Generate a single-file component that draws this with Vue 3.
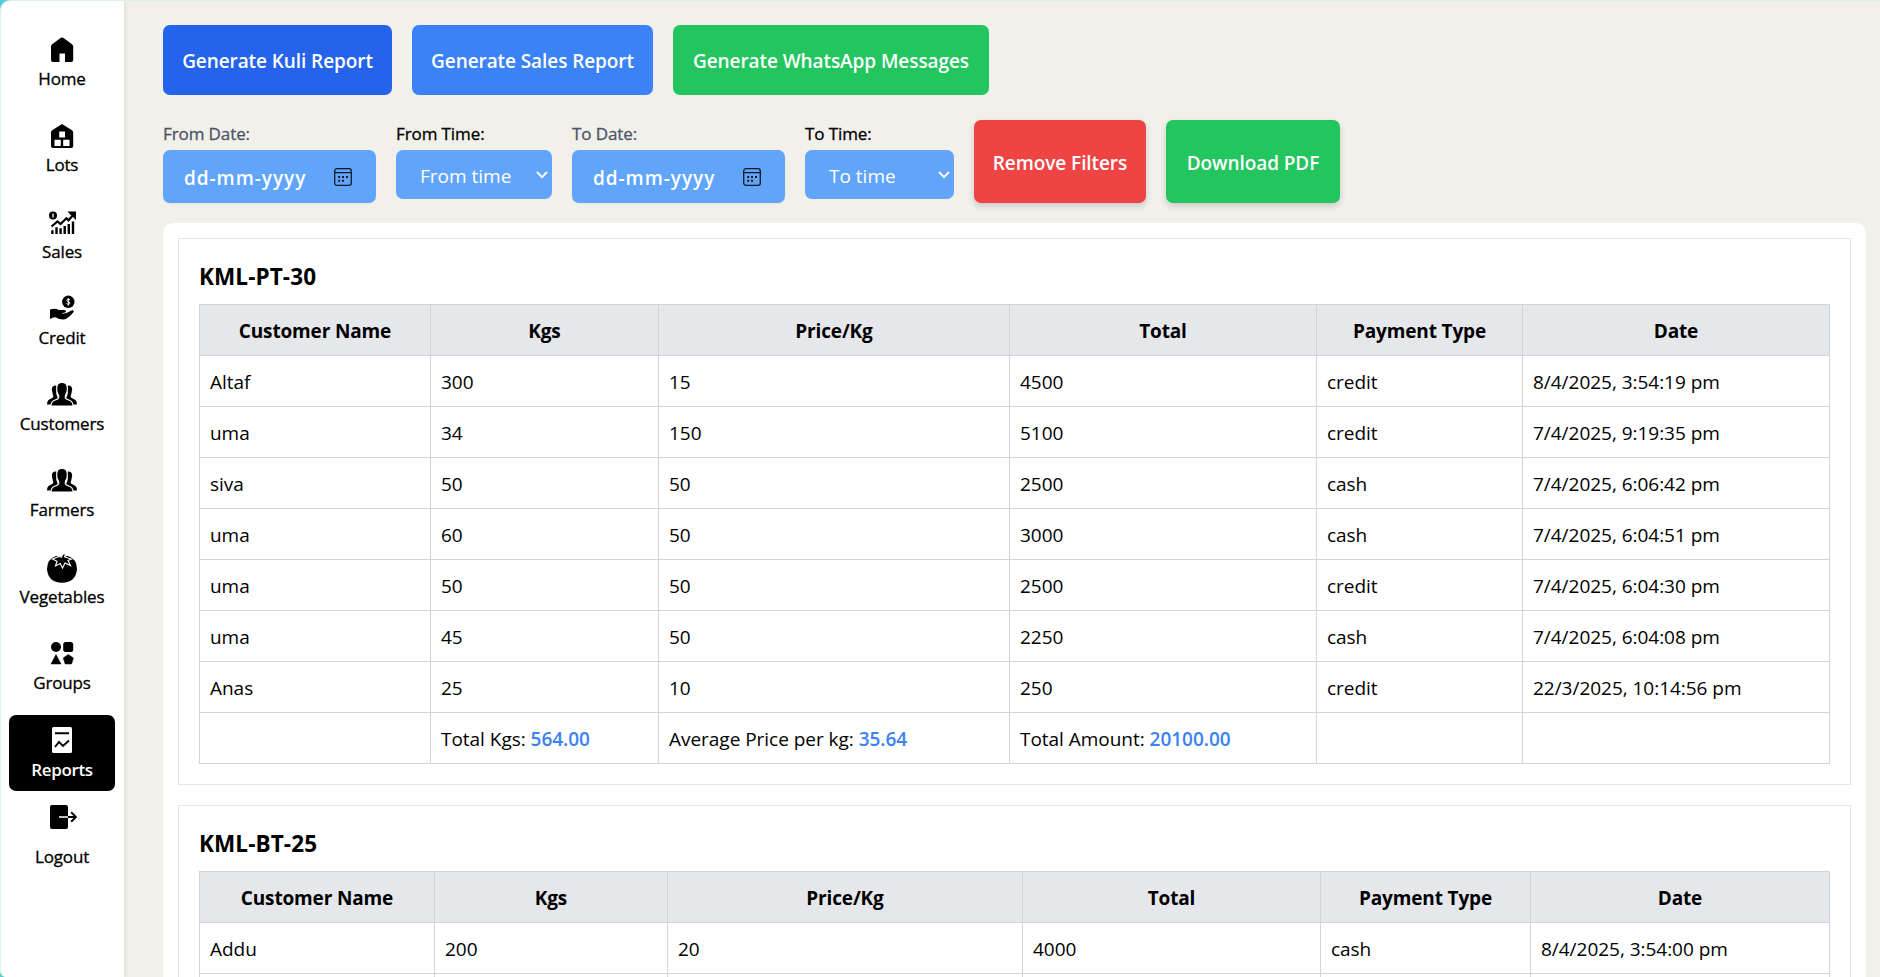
<script setup>
const nav = [
  { label: 'Home', icon: 'home' },
  { label: 'Lots', icon: 'lots' },
  { label: 'Sales', icon: 'sales' },
  { label: 'Credit', icon: 'credit' },
  { label: 'Customers', icon: 'people' },
  { label: 'Farmers', icon: 'people' },
  { label: 'Vegetables', icon: 'tomato' },
  { label: 'Groups', icon: 'groups' },
  { label: 'Reports', icon: 'reports', active: true },
  { label: 'Logout', icon: 'logout' }
]
const heads = ['Customer Name', 'Kgs', 'Price/Kg', 'Total', 'Payment Type', 'Date']
const lots = [
  {
    name: 'KML-PT-30',
    cols: [231, 228, 351, 307, 206, 307],
    rows: [
      ['Altaf', '300', '15', '4500', 'credit', '8/4/2025, 3:54:19 pm'],
      ['uma', '34', '150', '5100', 'credit', '7/4/2025, 9:19:35 pm'],
      ['siva', '50', '50', '2500', 'cash', '7/4/2025, 6:06:42 pm'],
      ['uma', '60', '50', '3000', 'cash', '7/4/2025, 6:04:51 pm'],
      ['uma', '50', '50', '2500', 'credit', '7/4/2025, 6:04:30 pm'],
      ['uma', '45', '50', '2250', 'cash', '7/4/2025, 6:04:08 pm'],
      ['Anas', '25', '10', '250', 'credit', '22/3/2025, 10:14:56 pm']
    ],
    totals: ['564.00', '35.64', '20100.00']
  },
  {
    name: 'KML-BT-25',
    cols: [235, 233, 355, 298, 210, 299],
    rows: [
      ['Addu', '200', '20', '4000', 'cash', '8/4/2025, 3:54:00 pm'],
      ['', '', '', '', '', '']
    ],
    totals: null
  }
]
</script>

<template>
  <div class="app">
    <aside class="sidebar">
      <a v-for="n in nav" :key="n.label" class="item" :class="[n.icon, { active: n.active }]">
        <svg v-if="n.icon === 'home'" class="ico" viewBox="0 0 30 30"><path d="M15 2.500Q15.800 2.500 16.500 3L25 9.300Q26.200 10.200 26.200 11.600V25Q26.200 27 24.200 27H18V18.500H12.500V27H6Q4 27 4 25V11.600Q4 10.200 5.200 9.300L13.500 3Q14.200 2.500 15 2.500Z" /></svg>
        <svg v-else-if="n.icon === 'lots'" class="ico" viewBox="0 0 30 30"><path fill-rule="evenodd" d="M15 3L25 9.300Q26.200 10.100 26.200 11.500V25Q26.200 27 24.200 27H6Q4 27 4 25V11.500Q4 10.100 5.200 9.300ZM12.200 10.500V16.500H18V10.500ZM7.500 18.800V25H13.800V18.800ZM16.200 18.800V25H22.500V18.800Z" /></svg>
        <svg v-else-if="n.icon === 'sales'" class="ico" viewBox="0 0 30 30"><circle cx="6" cy="7.500" r="4" /><path d="M6 5.400v4.200" stroke="#fff" stroke-width="1.300" /><path d="M4.500 18.500L10.500 13.500L13.500 16L19.500 10.300L21.500 12.300L27 6" class="line" stroke-width="2.200" /><path d="M20.500 3.500H29V12L26 9L23 6.200Z" /><path d="M4.200 22.200H6.600V26H4.200ZM8.300 19.200H10.700V26H8.300ZM12.400 20.200H14.800V26H12.400ZM16.500 18H18.900V26H16.500ZM20.600 16H23V26H20.600ZM24.800 13.500H27.200V26H24.800Z" /></svg>
        <svg v-else-if="n.icon === 'credit'" class="ico" viewBox="0 0 30 30"><circle cx="21.300" cy="7.800" r="6.200" /><path d="M23 6C22 5 19.700 5.200 19.800 6.500C20 8 22.900 7.500 22.900 9.100C22.800 10.500 20.500 10.600 19.500 9.500M21.300 4v7.700" fill="none" stroke="#fff" stroke-width="1" /><path d="M3 15.500Q8 14 12 16H17.500Q19.500 16.300 18.800 18.300L14.500 19.200Q17.500 20.200 20 18.800L25 16.200Q27.500 15.800 26.600 18Q21 25 16.500 25.600Q12 25.500 8.500 23.300Q6 23 3 25Z" /></svg>
        <svg v-else-if="n.icon === 'people'" class="ico" viewBox="0 0 30 30"><path d="M9.500 5.500Q5 5 4.800 9.500L5.800 14.500Q6.800 16 6 17.500L1.500 20Q0 21 0 24.500H6.500Q6.500 20 11 18.500L9.300 14ZM20.500 5.500Q25 5 25.200 9.500L24.200 14.500Q23.200 16 24 17.500L28.500 20Q30 21 30 24.500H23.500Q23.500 20 19 18.500L20.700 14Z" /><path d="M15 2.500Q20.300 2.500 20.300 8.500Q20.500 13 18.300 15.500V18Q19 19.200 23 20.500Q26 22 26 26H4Q4 22 7 20.500Q11 19.200 11.700 18V15.500Q9.500 13 9.700 8.500Q9.700 2.500 15 2.500Z" stroke="#fff" stroke-width="1.100" /></svg>
        <svg v-else-if="n.icon === 'tomato'" class="ico" viewBox="0 0 30 30"><path d="M9 3Q15 4.500 21 3Q30 6 30 16Q29 29.500 15 29.700Q1 29.500 0 16Q0 6 9 3Z" /><path d="M5.500 6L12 3.500L14.500 4Q15 1.500 17 .5L18.500 1.500L17.500 4L24.500 6L21 7.500L23.500 12.500L18 10L15.500 15L13.200 10.500L8.500 13L10 8.200Z" stroke="#fff" stroke-width="1.100" /></svg>
        <svg v-else-if="n.icon === 'groups'" class="ico" viewBox="0 0 30 30"><circle cx="9" cy="8" r="5" /><rect x="16.200" y="3" width="10" height="10" rx="2.500" /><path d="M9 15.500L14 25H4ZM21.300 15.400L26.500 19L24.500 25H18.200L16.200 19Z" stroke="currentColor" stroke-width=".5" stroke-linejoin="round" /></svg>
        <svg v-else-if="n.icon === 'reports'" class="ico" viewBox="0 0 30 30"><rect x="5" y="2" width="20" height="26" rx="1.500" /><path d="M8 8.200H22M8 22L12 17L16 21L22 15.500" fill="none" stroke="#000" stroke-width="1.900" /></svg>
        <svg v-else class="ico" viewBox="0 0 30 30"><rect x="3" y="3" width="18" height="24" rx="2" /><path d="M12 15H21" stroke="#fff" stroke-width="1.600" /><path d="M21 15H28.500M24.200 10.300L29 15L24.200 19.700" class="line" stroke-width="1.900" /></svg>
        <span>{{ n.label }}</span>
      </a>
    </aside>
    <main>
      <div class="actions">
        <button class="kuli">Generate Kuli Report</button>
        <button class="sale">Generate Sales Report</button>
        <button class="whats">Generate WhatsApp Messages</button>
      </div>
      <div class="filters">
        <template v-for="p in ['From', 'To']" :key="p">
          <div class="field date">
            <label>{{ p }} Date:</label>
            <div class="box">
              <span>dd-mm-yyyy</span>
              <svg class="cal" viewBox="0 0 18 18"><rect x=".7" y=".7" width="16.600" height="16.600" rx="2.300" fill="none" stroke="#111a26" stroke-width="1.300" /><path d="M.7 4.600H17.300" stroke="#111a26" stroke-width="1.200" /><path d="M4.200 8h2v2h-2zM8 8h2v2h-2zM12 8h2v2h-2zM4.200 11.700h2v2h-2zM8 11.700h2v2h-2z" fill="#111a26" /></svg>
            </div>
          </div>
          <div class="field time" :class="p.toLowerCase()">
            <label>{{ p }} Time:</label>
            <div class="box">
              <span>{{ p }} time</span>
              <svg class="chev" viewBox="0 0 12 8"><path d="M1 1L6 6.200L11 1" fill="none" stroke="#fff" stroke-width="1.900" /></svg>
            </div>
          </div>
        </template>
        <button class="remove">Remove Filters</button>
        <button class="download">Download PDF</button>
      </div>
      <div class="panel">
        <section v-for="lot in lots" :key="lot.name">
          <h2>{{ lot.name }}</h2>
          <table>
            <colgroup><col v-for="(w, i) in lot.cols" :key="i" :style="{ width: w + 'px' }" /></colgroup>
            <thead>
              <tr><th v-for="h in heads" :key="h">{{ h }}</th></tr>
            </thead>
            <tbody>
              <tr v-for="(r, i) in lot.rows" :key="i">
                <td v-for="(c, j) in r" :key="j">{{ c }}</td>
              </tr>
              <tr v-if="lot.totals">
                <td></td>
                <td>Total Kgs: <b>{{ lot.totals[0] }}</b></td>
                <td>Average Price per kg: <b>{{ lot.totals[1] }}</b></td>
                <td>Total Amount: <b>{{ lot.totals[2] }}</b></td>
                <td></td>
                <td></td>
              </tr>
            </tbody>
          </table>
        </section>
      </div>
    </main>
  </div>
</template>

<style>
html, body { margin: 0; background: #4fcdd0; overflow: hidden; }
</style>

<style scoped>
* { box-sizing: border-box; }
.app { display: flex; width: 1880px; height: 977px; overflow: hidden; background: #f1f0eb; border-left: 1px solid #d9f3f4; border-top: 1px solid #dcefec; border-radius: 10px 0 0 6px; font-family: 'Segoe UI', 'Open Sans', 'Noto Sans', sans-serif; font-size: 19px; color: #000; }
.sidebar { flex: none; width: 123px; height: 976px; background: #fff; box-shadow: 0 0 6px rgba(0, 0, 0, .13); padding: 24px 9px 0 8px; display: flex; flex-direction: column; gap: 10.300px; }
.item { height: 76px; flex: none; border-radius: 7px; display: flex; flex-direction: column; align-items: center; padding-top: 10px; font-size: 17px; -webkit-text-stroke: .3px currentColor; }
.item span { line-height: 26px; letter-spacing: -.15px; margin-top: 1px; }
.item.active { background: #000; color: #fff; font-weight: 600; -webkit-text-stroke: 0; }
.item.active span { margin-top: 2px; letter-spacing: -.35px; }
.logout { margin-top: -10px; }
.logout span { margin-top: 12px; }
.ico { width: 30px; height: 30px; flex: none; fill: currentColor; -webkit-text-stroke: 0; }
.ico .line { fill: none; stroke: currentColor; }
main { flex: none; width: 1703px; margin-left: 39px; padding-top: 24px; }
.actions { display: flex; gap: 20px; }
button { border: 0; padding: 2px 0 0; border-radius: 7px; color: #fff; font: 600 19px 'Segoe UI', 'Open Sans', 'Noto Sans', sans-serif; letter-spacing: -.08px; white-space: nowrap; }
.actions button { height: 70px; }
.kuli { width: 229px; background: #2563eb; }
.sale { width: 241px; background: #3b82f6; }
.whats { width: 316px; background: #22c55e; }
.filters { display: flex; gap: 20px; margin-top: 25px; height: 83px; }
.filters button { height: 83px; box-shadow: 0 3px 6px rgba(0, 0, 0, .16); }
.remove { width: 172px; background: #ef4444; }
.download { width: 174px; background: #22c55e; }
.field label { display: block; height: 30px; line-height: 28px; font-size: 17px; letter-spacing: -.1px; -webkit-text-stroke: .3px currentColor; }
.field .box { display: flex; align-items: center; justify-content: space-between; background: #60a5fa; color: #fff; border-radius: 7px; }
.field .box span { padding-top: 2px; }
.date { width: 213px; }
.date label { color: #4b5563; }
.date .box { height: 53px; padding: 0 24px 0 21px; font-weight: 600; letter-spacing: .95px; box-shadow: 0 1px 2px rgba(0, 0, 0, .05); }
.cal { width: 18px; height: 18px; }
.time .box { height: 49px; padding: 0 4px 0 24px; }
.time.from { width: 156px; }
.time.to { width: 149px; }
.chev { width: 12px; height: 8px; }
.panel { margin-top: 20px; background: #fff; border-radius: 10px; padding: 15px; height: 900px; }
section { border: 1px solid #e5e7eb; padding: 20px; margin-bottom: 20px; }
h2 { margin: 0 0 10px; height: 35px; line-height: 36px; font-size: 22.500px; letter-spacing: .1px; font-weight: 700; }
table { border-collapse: collapse; table-layout: fixed; width: 1631px; }
th, td { border: 1px solid #d1d5db; height: 51px; padding: 2px 10px 0; line-height: 30px; text-align: left; font-weight: 400; letter-spacing: -.03px; white-space: nowrap; }
th { background: #e5e7eb; text-align: center; font-weight: 700; letter-spacing: -.15px; }
b { font-weight: 600; color: #3b82f6; }
</style>
